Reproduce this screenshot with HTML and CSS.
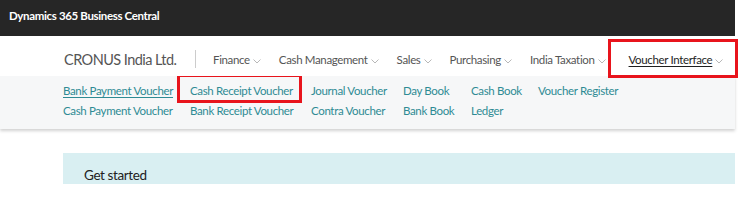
FILE: index.html
```html
<!DOCTYPE html>
<html>
<head>
<meta charset="utf-8">
<link rel="stylesheet" href="styles.css">
</head>
<body>
<div class="app">
  <header class="topbar">
    <span class="brand">Dynamics 365 Business Central</span>
  </header>
  <nav class="mainnav">
    <span class="company">CRONUS India Ltd.</span>
    <span class="sep"></span>
    <ul class="menu">
      <li class="item">Finance<svg class="chev" viewBox="0 0 8 5"><path d="M0.5 0.5 L4 4 L7.5 0.5"/></svg></li>
      <li class="item">Cash Management<svg class="chev" viewBox="0 0 8 5"><path d="M0.5 0.5 L4 4 L7.5 0.5"/></svg></li>
      <li class="item">Sales<svg class="chev" viewBox="0 0 8 5"><path d="M0.5 0.5 L4 4 L7.5 0.5"/></svg></li>
      <li class="item">Purchasing<svg class="chev" viewBox="0 0 8 5"><path d="M0.5 0.5 L4 4 L7.5 0.5"/></svg></li>
      <li class="item">India Taxation<svg class="chev" viewBox="0 0 8 5"><path d="M0.5 0.5 L4 4 L7.5 0.5"/></svg></li>
      <li class="item active mark-nav"><span class="u">Voucher Interface</span><svg class="chev" viewBox="0 0 8 5"><path d="M0.5 0.5 L4 4 L7.5 0.5"/></svg></li>
    </ul>
  </nav>
  <div class="subnav">
    <div class="links">
      <a class="link under">Bank Payment Voucher</a>
      <a class="link mark-sub">Cash Receipt Voucher</a>
      <a class="link">Journal Voucher</a>
      <a class="link">Day Book</a>
      <a class="link">Cash Book</a>
      <a class="link">Voucher Register</a>
      <a class="link">Cash Payment Voucher</a>
      <a class="link">Bank Receipt Voucher</a>
      <a class="link">Contra Voucher</a>
      <a class="link">Bank Book</a>
      <a class="link">Ledger</a>
    </div>
  </div>
  <main class="content">
    <div class="card"><span class="card-title">Get started</span></div>
  </main>
</div>
</body>
</html>
```
FILE: styles.css
```css
html, body {
  margin: 0;
  padding: 0;
  background: #ffffff;
}
.app {
  width: 735px;
  font-family: "Lato", "Open Sans", sans-serif;
  white-space: nowrap;
}
.topbar {
  height: 36px;
  box-sizing: border-box;
  background: #262626;
  padding: 8px 0 0 9px;
}
.brand {
  display: block;
  color: #ffffff;
  font-weight: 700;
  font-size: 11.5px;
  letter-spacing: -0.35px;
  line-height: 16px;
}
.mainnav {
  height: 40px;
  box-sizing: border-box;
  display: flex;
  align-items: flex-start;
  padding: 14px 0 0 64px;
  background: #ffffff;
  position: relative;
  z-index: 2;
}
.company {
  font-size: 14.5px;
  letter-spacing: -0.55px;
  line-height: 20px;
  color: #555555;
  width: 131px;
}
.sep {
  width: 1px;
  height: 18px;
  background: #cccccc;
  margin-right: 17px;
}
.menu {
  list-style: none;
  margin: 0;
  padding: 0;
  display: flex;
  align-items: center;
}
.item {
  display: flex;
  align-items: center;
  font-size: 11.5px;
  letter-spacing: -0.35px;
  line-height: 20px;
  color: #555555;
  margin-right: 18px;
}
.chev {
  width: 8px;
  height: 5px;
  margin-left: 3px;
  margin-top: 2px;
}
.chev path {
  fill: none;
  stroke: #b0b0b0;
  stroke-width: 0.9;
}
.item.active {
  color: #1e1e1e;
  margin-left: 5px;
  margin-right: 0;
}
.u {
  text-decoration: underline;
  text-underline-offset: 2px;
}
.mark-nav {
  position: relative;
}
.mark-nav::after {
  content: "";
  position: absolute;
  left: -21px;
  width: 130px;
  top: -11px;
  height: 39px;
  box-sizing: border-box;
  border: 3px solid #e8141c;
}
.subnav {
  height: 53px;
  box-sizing: border-box;
  background: #f6f7f8;
  box-shadow: 0 2px 3px rgba(0, 0, 0, 0.18);
  padding: 5px 0 0 63px;
  position: relative;
  z-index: 1;
}
.links {
  display: grid;
  grid-template-columns: 127px 121px 92px 68px 67px auto;
  grid-auto-rows: 20px;
}
.link {
  font-size: 11.5px;
  letter-spacing: -0.35px;
  color: #2e8b94;
  line-height: 20px;
}
.link.under {
  text-decoration: underline;
  text-underline-offset: 2px;
}
.mark-sub {
  position: relative;
}
.mark-sub::after {
  content: "";
  position: absolute;
  left: -13px;
  width: 125px;
  top: -7px;
  height: 29px;
  border: 3px solid #e8141c;
  box-sizing: border-box;
}
.content {
  padding: 24px 0 0 63px;
}
.card {
  height: 31px;
  box-sizing: border-box;
  background: #d9eff2;
  padding: 14px 0 0 21px;
}
.card-title {
  display: block;
  font-size: 13.5px;
  letter-spacing: -0.4px;
  line-height: 16px;
  color: #212121;
}
```
